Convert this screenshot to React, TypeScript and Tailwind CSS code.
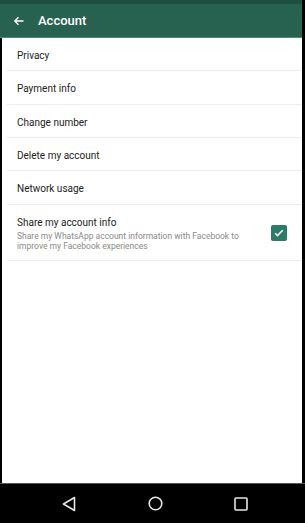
import React from "react";

const rows: { t: string; h: string }[] = [
  { t: "Privacy", h: "h-[33px]" },
  { t: "Payment info", h: "h-[34px]" },
  { t: "Change number", h: "h-[33px]" },
  { t: "Delete my account", h: "h-[33px]" },
  { t: "Network usage", h: "h-[34px]" },
];

export default function App() {
  return (
    <div className="w-[305px] h-[523px] bg-black flex flex-col overflow-hidden" style={{ fontFamily: "Roboto, 'Noto Sans', sans-serif" }}>
      <div className="flex-1 flex flex-col mr-[3px] min-h-0">
        <div className="h-[4px] bg-[#1f4f43]" />
        <div className="h-[34px] bg-[#27614f] flex items-center border-b border-[#4f8a7b]">
          <svg width="12" height="12" viewBox="0 0 24 24" className="ml-[13px]" fill="none" stroke="white" strokeWidth="2.6">
            <path d="M21 12H4M11 4.5 3.5 12l7.5 7.5" />
          </svg>
          <span className="ml-[13px] text-white text-[13px] font-medium">Account</span>
        </div>
        <div className="flex-1 bg-white flex flex-col ml-[2px]">
          {rows.map((r) => (
            <div key={r.t} className={`${r.h} flex items-center pt-[2px] border-b border-[#ececec] ml-[5px]`}>
              <span className="text-[10px] text-[#222] ml-[10px]">{r.t}</span>
            </div>
          ))}
          <div className="h-[56px] flex items-center border-b border-[#ececec] ml-[5px]">
            <div className="flex-1 pl-[10px] flex flex-col pt-[1px]">
              <span className="text-[10px] text-[#222] leading-[13px]">Share my account info</span>
              <span className="text-[8.5px] text-[#8a8a8a] leading-[10px] mt-[2px]">
                Share my WhatsApp account information with Facebook to
                <br />
                improve my Facebook experiences
              </span>
            </div>
            <div className="w-[16px] h-[16px] rounded-[2px] bg-[#2b7a6a] flex items-center justify-center mr-[15px]">
              <svg width="12" height="12" viewBox="0 0 24 24" fill="none" stroke="white" strokeWidth="3.2">
                <path d="M4.5 12.5l4.5 4.5L19.5 6.5" />
              </svg>
            </div>
          </div>
        </div>
      </div>
      <div className="h-[40px] shrink-0 bg-black border-t border-[#555] flex items-center">
        <svg width="14" height="16" viewBox="0 0 14 16" className="ml-[62px]" fill="none" stroke="#e8e8e8" strokeWidth="1.6">
          <path d="M12.5 1.5v13L1.5 8z" strokeLinejoin="round" />
        </svg>
        <svg width="15" height="15" viewBox="0 0 15 15" className="ml-[72px]" fill="none" stroke="#e8e8e8" strokeWidth="1.6">
          <circle cx="7.5" cy="7.5" r="6.3" />
        </svg>
        <svg width="14" height="14" viewBox="0 0 14 14" className="ml-[71px]" fill="none" stroke="#e8e8e8" strokeWidth="1.6">
          <rect x="1" y="1" width="12" height="12" rx="1" />
        </svg>
      </div>
    </div>
  );
}
